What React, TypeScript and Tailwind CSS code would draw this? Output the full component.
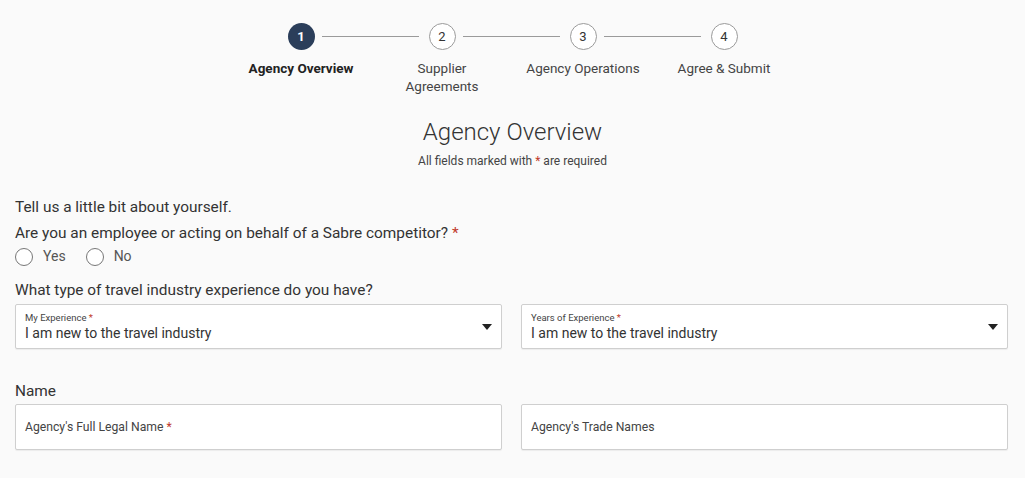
import React from "react";

const steps = [
  { n: 1, label: ["Agency Overview"], active: true },
  { n: 2, label: ["Supplier", "Agreements"] },
  { n: 3, label: ["Agency Operations"] },
  { n: 4, label: ["Agree & Submit"] },
];

function Caret() {
  return (
    <svg width="10" height="6" viewBox="0 0 10 6" className="shrink-0">
      <path d="M0 0 L10 0 L5 6 Z" fill="#222" />
    </svg>
  );
}

function Req() {
  return <span className="text-[#c0392b]">*</span>;
}

export default function App() {
  return (
    <div
      className="w-[1025px] h-[478px] overflow-hidden bg-[#fafafa] text-[#333]"
      style={{ fontFamily: "Roboto, 'Liberation Sans', sans-serif" }}
    >
      {/* Stepper */}
      <div className="flex justify-center pt-[23px]">
        {steps.map((s, i) => (
          <div key={s.n} className="relative w-[141px] flex flex-col items-center">
            {i < steps.length - 1 && (
              <div className="absolute top-[13px] left-[91px] w-[97px] h-px bg-[#9a9a9a]" />
            )}
            <div
              className={
                s.active
                  ? "w-[27px] h-[27px] rounded-full bg-[#2b3e5a] text-white flex items-center justify-center text-[13px] font-bold"
                  : "w-[27px] h-[27px] rounded-full border border-[#9a9a9a] bg-white text-[#333] flex items-center justify-center text-[13px]"
              }
            >
              {s.n}
            </div>
            <div
              className={
                "mt-[9px] text-center text-[13.5px] leading-[18px] " +
                (s.active ? "font-bold text-[#222]" : "text-[#444]")
              }
            >
              {s.label.map((l) => (
                <div key={l}>{l}</div>
              ))}
            </div>
          </div>
        ))}
      </div>

      {/* Title */}
      <div className="flex flex-col items-center mt-[22px]">
        <div className="text-[24px] font-light leading-[30px] text-[#333]">Agency Overview</div>
        <div className="text-[12px] leading-[14px] mt-[7px] text-[#444]">
          All fields marked with <Req /> are required
        </div>
      </div>

      {/* Form */}
      <div className="px-[15px] pr-[17px] mt-[29px]">
        <div className="text-[15.4px] leading-[20px] text-[#333]">Tell us a little bit about yourself.</div>
        <div className="text-[15.4px] leading-[20px] mt-[6px] text-[#333]">
          Are you an employee or acting on behalf of a Sabre competitor? <Req />
        </div>
        <div className="flex items-center mt-[3px] text-[14px] text-[#555]">
          <span className="w-[18px] h-[18px] rounded-full border border-[#777] bg-white" />
          <span className="ml-[10px]">Yes</span>
          <span className="w-[18px] h-[18px] rounded-full border border-[#777] bg-white ml-[20px]" />
          <span className="ml-[10px]">No</span>
        </div>

        <div className="text-[15.4px] leading-[20px] mt-[13px] text-[#333]">
          What type of travel industry experience do you have?
        </div>
        <div className="grid grid-cols-2 gap-[19px] mt-[4px]">
          {["My Experience", "Years of Experience"].map((lbl) => (
            <div
              key={lbl}
              className="h-[45px] border border-[#cfcfcf] rounded-[2px] bg-white flex items-center pl-[9px] pr-[9px] shadow-[0_1px_1px_rgba(0,0,0,0.06)]"
            >
              <div className="flex-1 flex flex-col">
                <div className="text-[9.5px] leading-[12px] text-[#444]">
                  {lbl} <Req />
                </div>
                <div className="text-[14px] leading-[18px] text-[#333]">I am new to the travel industry</div>
              </div>
              <Caret />
            </div>
          ))}
        </div>

        <div className="text-[15.4px] leading-[20px] mt-[32px] text-[#333]">Name</div>
        <div className="grid grid-cols-2 gap-[19px] mt-[3px]">
          <div className="h-[46px] border border-[#cfcfcf] rounded-[2px] bg-white flex items-center pl-[9px] text-[12.2px] text-[#444] shadow-[0_1px_1px_rgba(0,0,0,0.06)]">
            <span>
              Agency's Full Legal Name <Req />
            </span>
          </div>
          <div className="h-[46px] border border-[#cfcfcf] rounded-[2px] bg-white flex items-center pl-[9px] text-[12.2px] text-[#444] shadow-[0_1px_1px_rgba(0,0,0,0.06)]">
            Agency's Trade Names
          </div>
        </div>
      </div>
    </div>
  );
}
